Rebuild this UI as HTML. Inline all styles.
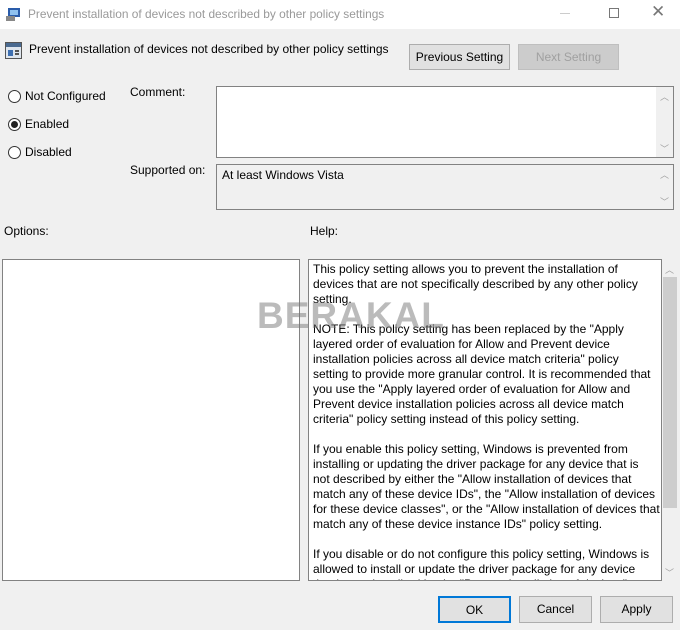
<!DOCTYPE html>
<html><head><style>
*{margin:0;padding:0;box-sizing:border-box}
body{width:680px;height:630px;background:#f0f0f0;font-family:"Liberation Sans",sans-serif;font-size:12px;color:#000;position:relative;overflow:hidden}
.a{position:absolute;white-space:nowrap}
.btn{position:absolute;background:#e1e1e1;border:1px solid #adadad;text-align:center;line-height:24px;font-size:12px}
.box{position:absolute;border:1px solid #828282;background:#fff}
.radio{position:absolute;width:13px;height:13px;border:1px solid #333;border-radius:50%;background:#fff}
.help{position:absolute;left:313px;top:262px;font-size:12px;line-height:15px;white-space:nowrap;height:318px;overflow:hidden}
.sb{position:absolute;color:#a0a0a0;font-size:9px}
</style></head><body>
<div class="a" style="left:0;top:0;width:680px;height:29px;background:#fff"></div>
<svg class="a" style="left:6px;top:6px" width="16" height="16"><rect x="2" y="2" width="12" height="9" fill="#2a5caa"/><rect x="4" y="4" width="8" height="5" fill="#8fc1ef"/><rect x="0" y="10" width="9" height="5" fill="#888"/></svg>
<div class="a" style="left:28px;top:7px;color:#999;font-size:11.9px">Prevent installation of devices not described by other policy settings</div>
<div class="a" style="left:560px;top:13px;width:10px;height:1px;background:#ccc"></div>
<div class="a" style="left:609px;top:8px;width:10px;height:10px;border:1px solid #777"></div>
<div class="a" style="left:651px;top:2px;font-size:17px;color:#777">✕</div>

<svg class="a" style="left:5px;top:42px" width="17" height="17"><rect x="0.5" y="0.5" width="16" height="16" fill="#dfe6ee" stroke="#555"/><rect x="1" y="1" width="15" height="4" fill="#4a6a90"/><rect x="3" y="8" width="5" height="6" fill="#3e6fb0"/><rect x="10" y="8" width="4" height="2" fill="#555"/><rect x="10" y="11" width="4" height="2" fill="#555"/></svg>
<div class="a" style="left:29px;top:42px;font-size:12px">Prevent installation of devices not described by other policy settings</div>
<div class="btn" style="left:409px;top:44px;width:101px;height:26px">Previous Setting</div>
<div class="btn" style="left:518px;top:44px;width:101px;height:26px;background:#cccccc;border-color:#bfbfbf;color:#a0a0a0">Next Setting</div>

<div class="radio" style="left:8px;top:90px"></div><div class="a" style="left:25px;top:89px">Not Configured</div>
<div class="radio" style="left:8px;top:118px"></div><div class="a" style="left:11px;top:121px;width:7px;height:7px;border-radius:50%;background:#222"></div><div class="a" style="left:25px;top:117px">Enabled</div>
<div class="radio" style="left:8px;top:146px"></div><div class="a" style="left:25px;top:145px">Disabled</div>

<div class="a" style="left:130px;top:85px">Comment:</div>
<div class="box" style="left:216px;top:86px;width:458px;height:72px"></div>
<div class="a" style="left:656px;top:87px;width:17px;height:70px;background:#f0f0f0"></div>
<div class="sb" style="left:660px;top:90px">︿</div><div class="sb" style="left:660px;top:142px">﹀</div>
<div class="a" style="left:130px;top:163px">Supported on:</div>
<div class="box" style="left:216px;top:164px;width:458px;height:46px;background:#f0f0f0"></div>
<div class="a" style="left:222px;top:168px">At least Windows Vista</div>
<div class="sb" style="left:660px;top:168px">︿</div><div class="sb" style="left:660px;top:195px">﹀</div>

<div class="a" style="left:4px;top:224px">Options:</div>
<div class="a" style="left:310px;top:224px">Help:</div>
<div class="box" style="left:2px;top:259px;width:298px;height:322px"></div>
<div class="box" style="left:308px;top:259px;width:354px;height:322px"></div>
<div class="a" style="left:662px;top:259px;width:16px;height:322px;background:#f0f0f0"></div>
<div class="a" style="left:663px;top:277px;width:14px;height:231px;background:#cdcdcd"></div>
<div class="sb" style="left:665px;top:263px">︿</div><div class="sb" style="left:665px;top:566px">﹀</div>
<div class="help">This policy setting allows you to prevent the installation of<br>devices that are not specifically described by any other policy<br>setting.<br><br>NOTE: This policy setting has been replaced by the "Apply<br>layered order of evaluation for Allow and Prevent device<br>installation policies across all device match criteria" policy<br>setting to provide more granular control. It is recommended that<br>you use the "Apply layered order of evaluation for Allow and<br>Prevent device installation policies across all device match<br>criteria" policy setting instead of this policy setting.<br><br>If you enable this policy setting, Windows is prevented from<br>installing or updating the driver package for any device that is<br>not described by either the "Allow installation of devices that<br>match any of these device IDs", the "Allow installation of devices<br>for these device classes", or the "Allow installation of devices that<br>match any of these device instance IDs" policy setting.<br><br>If you disable or do not configure this policy setting, Windows is<br>allowed to install or update the driver package for any device<br>that is not described by the "Prevent installation of devices"</div>
<div class="a" style="left:257px;top:295px;font-size:37px;font-weight:bold;color:rgba(120,120,120,0.5);letter-spacing:1px">BERAKAL</div>

<div class="btn" style="left:438px;top:596px;width:73px;height:27px;border:2px solid #0078d7">OK</div>
<div class="btn" style="left:519px;top:596px;width:73px;height:27px">Cancel</div>
<div class="btn" style="left:600px;top:596px;width:73px;height:27px">Apply</div>
</body></html>
